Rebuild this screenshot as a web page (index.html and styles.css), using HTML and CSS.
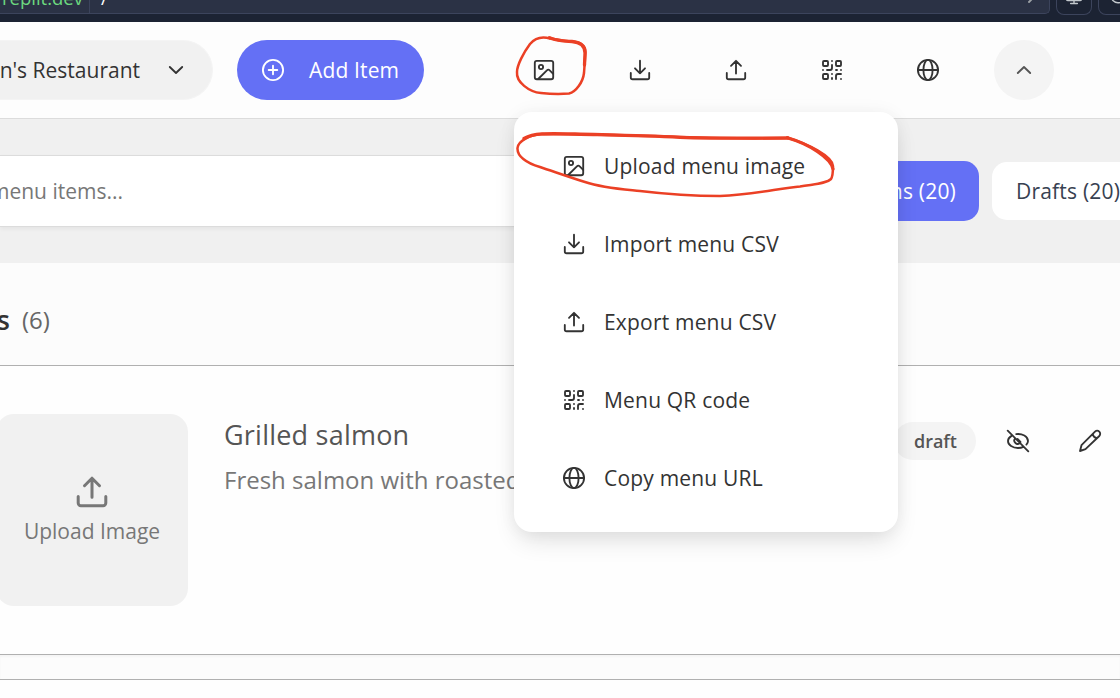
FILE: index.html
```
<!DOCTYPE html>
<html lang="en">
<head>
<meta charset="utf-8">
<title>Restaurant menu</title>
<link rel="stylesheet" href="styles.css">
</head>
<body>
<svg class="defs" width="0" height="0">
  <symbol id="image" viewBox="0 0 24 24"><rect x="2.8" y="2.8" width="18.4" height="18.4" rx="2"/><circle cx="9" cy="9" r="2.1"/><path d="M6.2 21 14.9 12.3a2 2 0 0 1 2.8 0L21.2 15.8"/></symbol>
  <symbol id="download" viewBox="0 0 24 24"><path d="M12 2.7v12.6M7 10.3l5 5 5-5M2.8 15v4.4a1.8 1.8 0 0 0 1.8 1.8h14.8a1.8 1.8 0 0 0 1.8-1.8V15"/></symbol>
  <symbol id="upload" viewBox="0 0 24 24"><path d="M12 15.5V2.9M7 7.8l5-5 5 5M2.8 15v4.4a1.8 1.8 0 0 0 1.8 1.8h14.8a1.8 1.8 0 0 0 1.8-1.8V15"/></symbol>
  <symbol id="qr" viewBox="0 0 24 24"><rect x="3" y="3" width="5" height="5" rx="1"/><rect x="16" y="3" width="5" height="5" rx="1"/><rect x="3" y="16" width="5" height="5" rx="1"/><path d="M21 16h-3a2 2 0 0 0-2 2v3M21 21v.01M12 7v3a2 2 0 0 1-2 2H7M3 12h.01M12 3h.01M12 16v.01M16 12h1M21 12v.01M12 21v-1"/></symbol>
  <symbol id="globe" viewBox="0 0 24 24"><circle cx="12" cy="12" r="10.1"/><ellipse cx="12" cy="12" rx="4.6" ry="10.1"/><path d="M2 12h20"/></symbol>
  <symbol id="plus" viewBox="0 0 24 24"><circle cx="12" cy="12" r="10.1"/><path d="M12 7.7v8.6M7.7 12h8.6"/></symbol>
  <symbol id="down" viewBox="0 0 24 24"><path d="m5.8 9 6.2 6 6.2-6"/></symbol>
  <symbol id="up" viewBox="0 0 24 24"><path d="m5.8 15 6.2-6 6.2 6"/></symbol>
  <symbol id="eye-off" viewBox="0 0 24 24"><path d="M1.7 1.7 22.3 22.3M5.2 7.1C3.3 8.3 2 9.8 2 12c0 4 4.7 7 10 7 2 0 3.800-.4 5.400-1.200M10.200 5.100c6-.8 11.800 2.300 11.800 6.900 0 1.300-.6 2.600-1.600 3.600M9.200 9.400c-1.200 1.300-1.100 3.300.1 4.500 1.200 1.300 3.200 1.300 4.500.2"/><path d="m11.500 10 3 3"/></symbol>
  <symbol id="pencil" viewBox="0 0 24 24"><path d="M17 2.700a3 3 0 0 1 4.300 4.300L7.500 20.200 2 22l1.500-5.800zM14.800 5.200c.3 2 1.800 3.600 4 4"/></symbol>
  <symbol id="monitor" viewBox="0 0 24 24"><rect x="2" y="3" width="20" height="15" rx="2"/><path d="M12 18v4M7.500 22h9"/></symbol>
</svg>

<div class="browser">
  <div class="url"><span class="host">replit.dev</span><span class="path">/</span><svg class="go" viewBox="0 0 10 10"><path d="M3 0 7 4 3 8"/></svg></div>
  <div class="tool"><svg class="tool-icon"><use href="#monitor"/></svg></div>
  <div class="tool last"><svg class="tool-icon" viewBox="0 0 24 24"><circle cx="12" cy="12" r="9"/></svg></div>
</div>

<header class="header">
  <div class="picker"><span>John's Restaurant</span><svg class="icon"><use href="#down"/></svg></div>
  <button class="add"><svg class="icon"><use href="#plus"/></svg><span>Add Item</span></button>
  <nav class="actions">
    <svg class="icon"><use href="#image"/></svg>
    <svg class="icon"><use href="#download"/></svg>
    <svg class="icon"><use href="#upload"/></svg>
    <svg class="icon"><use href="#qr"/></svg>
    <svg class="icon"><use href="#globe"/></svg>
  </nav>
  <button class="collapse"><svg class="icon"><use href="#up"/></svg></button>
</header>

<section class="filters">
  <div class="search"><span>Search menu items...</span></div>
  <div class="tab active">All Items (20)</div>
  <div class="tab">Drafts (20)</div>
</section>

<section class="category"><h2>Mains</h2><span class="count">(6)</span></section>

<article class="item">
  <div class="thumb"><svg class="thumb-icon"><use href="#upload"/></svg><span>Upload Image</span></div>
  <div class="info">
    <h3>Grilled salmon</h3>
    <p>Fresh salmon with roasted</p>
  </div>
  <div class="controls">
    <span class="badge">draft</span>
    <svg class="icon"><use href="#eye-off"/></svg>
    <svg class="icon"><use href="#pencil"/></svg>
  </div>
</article>
<div class="divider"></div>

<div class="menu">
  <div class="entry"><svg class="icon"><use href="#image"/></svg><span>Upload menu image</span></div>
  <div class="entry"><svg class="icon"><use href="#download"/></svg><span>Import menu CSV</span></div>
  <div class="entry"><svg class="icon"><use href="#upload"/></svg><span>Export menu CSV</span></div>
  <div class="entry"><svg class="icon"><use href="#qr"/></svg><span>Menu QR code</span></div>
  <div class="entry"><svg class="icon"><use href="#globe"/></svg><span>Copy menu URL</span></div>
</div>

<svg class="marks" viewBox="0 0 1120 698">
  <path d="M550 38.500C541 36 535 38 530 44C524 52 517 65 517 72C516 82 529 92 541 93C551 94 562 94 569 93.500C576 92 583 82 584 73L585.500 52C585.500 45 580 42 572 41.500C563 41 556 40 549 37.500"/>
  <path class="thick" d="M550 38C558 41 565 41 572 41.500C580 42 585 46 585 53L584.500 65"/>
  <path d="M788 138C750 139 710 138 680 137C640 136 580 134 543 134C530 134.500 518 141 517.500 148C517 156 526 163 540 167C555 172 572 178 585 182C603 188 620 189 640 191C665 194 690 196 720 196C753 195 780 188 800 186.500C815 184 826 184 831 179C833 176 833 170 833 166C832 156 808 144 787 137.500"/>
  <path class="thick" d="M524 138.500C535 132.500 550 133.500 575 134C610 135 640 135.500 680 137.300C715 138.500 750 138.300 788 138"/>
  <path class="thick" d="M788 138C809 144 831 158 833 169"/>
</svg>
</body>
</html>
```
FILE: styles.css
```
* { box-sizing: border-box; }
body {
  margin: 0;
  width: 1120px;
  height: 698px;
  overflow: hidden;
  position: relative;
  background: #fefefe;
  color: #333;
  font: 21px/30px "Open Sans", "Noto Sans", sans-serif;
}
.defs { position: absolute; }
svg { fill: none; stroke: currentColor; stroke-width: 1.85; stroke-linecap: round; stroke-linejoin: round; flex: none; }
.icon { width: 24px; height: 24px; }
h2, h3, p { margin: 0; }
button { border: 0; padding: 0; font: inherit; }

.browser { display: flex; height: 22px; background: #1c2333; overflow: hidden; }
.url { display: flex; flex: none; width: 1050px; height: 14px; background: #2b3245; border: 1px solid #3c445c; border-width: 0 1px 1px 0; border-radius: 0 0 5px 0; line-height: 14px; font-size: 18.5px; }
.url span { line-height: 24px; margin-top: -14px; height: 28px; }
.host { width: 90px; padding-right: 6px; border-right: 1px solid #3c445c; display: flex; justify-content: flex-end; color: #6cd97f; }
.path { margin-left: 11px; color: #fff; }
.go { width: 10px; height: 10px; margin: -6px 13px 0 auto; color: #9da2a6; }
.tool { flex: none; width: 36px; height: 15px; margin-left: 6px; border: 1px solid #3c445c; border-top: 0; border-radius: 0 0 8px 8px; display: flex; justify-content: center; align-items: flex-end; color: #c2c8cc; }
.tool-icon { width: 18px; height: 18px; margin-bottom: 9px; }
.tool.last { width: 40px; }

.header { display: flex; align-items: center; height: 97px; background: #fdfdfd; border-bottom: 1px solid #dcdcdc; }
.picker { display: flex; align-items: center; justify-content: flex-end; gap: 24px; width: 213px; height: 60px; padding-right: 24px; border: 1px solid #f4f4f4; border-left: 0; background: #f1f1f1; border-radius: 0 30px 30px 0; white-space: nowrap; flex: none; }
.add { display: flex; align-items: center; width: 187px; height: 60px; margin-left: 24px; padding-left: 24px; gap: 24px; border-radius: 30px; background: #6470f5; color: #fff; white-space: nowrap; letter-spacing: .15px; }
.actions { display: flex; gap: 72px; margin-left: 108px; }
.collapse { display: flex; align-items: center; justify-content: center; width: 60px; height: 60px; margin-left: 54px; border-radius: 50%; background: #f4f4f4; color: #555; }

.filters { display: flex; align-items: center; height: 144px; background: #f0f0f0; overflow: hidden; }
.search { display: flex; align-items: center; justify-content: flex-start; width: 768px; height: 72px; background: #fff; border: 1px solid #dcdcdc; border-width: 1px 0; box-shadow: 0 2px 4px #0000000d; color: #777; white-space: nowrap; flex: none; }
.search span { margin-left: -82px; }
.tab { height: 58px; margin-left: 13px; padding: 0 0 0 24px; border-radius: 15px; background: #fff; color: #374151; line-height: 58px; letter-spacing: .2px; width: 180px; flex: none; white-space: nowrap; }
.tab.active { height: 60px; line-height: 60px; width: 198px; padding: 0 23px 0 0; background: #6470f5; color: #fff; text-align: right; }

.category { display: flex; align-items: center; gap: 12px; height: 103px; padding-top: 12px; background: #fcfcfc; border-bottom: 1px solid #b0b0b0; }
.category h2 { width: 10px; display: flex; justify-content: flex-end; font-size: 27px; font-weight: 600; }
.count { font-size: 24px; color: #666; }

.item { display: flex; height: 289px; padding-top: 48px; background: #fefefe; border-bottom: 1px solid #b0b0b0; }
.thumb { display: flex; flex-direction: column; align-items: center; width: 192px; height: 192px; margin-left: -4px; padding-top: 60px; border-radius: 18px; background: #f1f1f1; color: #777; flex: none; }
.thumb-icon { width: 36px; height: 36px; stroke-width: 2; }
.thumb span { margin-top: 6px; }
.info { width: 672px; padding-left: 36px; flex: none; white-space: nowrap; }
.info h3 { font-size: 27px; line-height: 42px; font-weight: 500; letter-spacing: .22px; color: #555; }
.info p { font-size: 24px; line-height: 36px; margin-top: 6px; color: #777; }
.controls { display: flex; align-items: center; height: 38px; margin-top: 8px; margin-left: 34px; }
.badge { width: 82px; height: 38px; padding-right: 19px; border-radius: 19px; background: #f4f4f4; color: #555; text-align: right; font-size: 18px; line-height: 38px; font-weight: 600; margin-right: 30px; }
.controls .icon + .icon { margin-left: 48px; }
.divider { height: 25px; background: #fcfcfc; border-bottom: 1px solid #b0b0b0; box-shadow: inset 0 2px 2px #00000008; }

.menu { position: absolute; left: 514px; top: 112px; width: 384px; height: 420px; padding: 15px 48px; background: #fff; border-radius: 18px; box-shadow: 0 12px 24px -4px #0000001f, 0 0 18px #0000000d; }
.entry { display: flex; align-items: center; gap: 18px; height: 78px; white-space: nowrap; font-weight: 500; letter-spacing: .19px; }
.marks { position: absolute; left: 0; top: 0; width: 1120px; height: 698px; color: #eb4025; stroke-width: 2.5; }
.thick { stroke-width: 3.3; }
```
